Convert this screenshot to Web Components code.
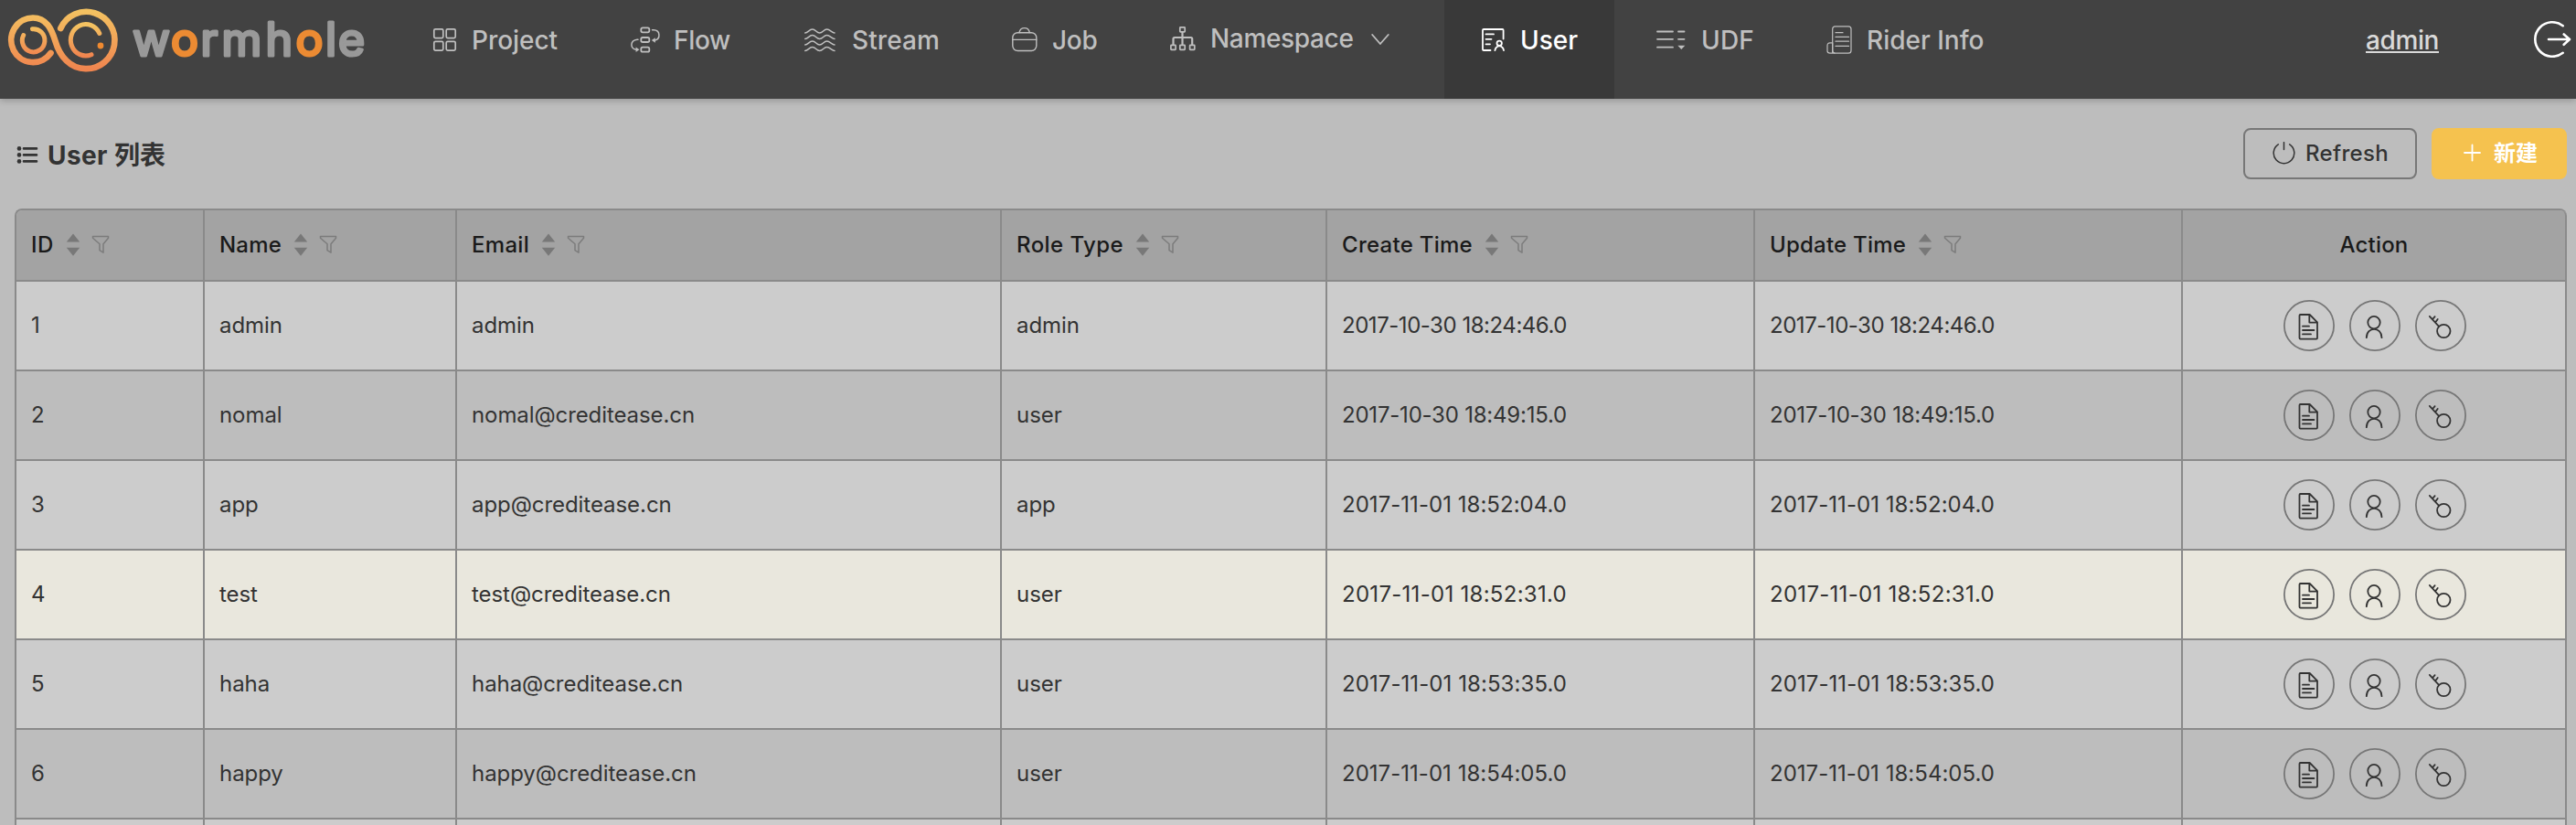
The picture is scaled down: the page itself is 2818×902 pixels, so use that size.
<!DOCTYPE html>
<html lang="zh-CN">
<head>
<meta charset="utf-8">
<title>Wormhole</title>
<style>
html,body{margin:0;height:902px;overflow:hidden;background:#bdbdbd;font-family:Inter,"Noto Sans CJK SC",sans-serif}
</style>
</head>
<body>
<worm-app></worm-app>
<script>
const define=(name,cls)=>customElements.define(name,cls);
const root=(el,html)=>{const t=document.createElement('template');t.innerHTML=html;el.attachShadow({mode:'open'}).append(t.content.cloneNode(true));return el.shadowRoot;};

/* Text whose tracking is adjusted so that its line takes a given width. */
define('track-text',class extends HTMLElement{
  connectedCallback(){
    if(this.shadowRoot)return;
    const s=root(this,`<style>:host{display:inline-block;white-space:pre}span{display:inline-block;text-decoration:inherit}</style><span><slot></slot></span>`);
    const w=+this.getAttribute('w');
    if(w){const e=s.querySelector('span');e.style.letterSpacing='0px';const n=this.textContent.length;
      e.style.letterSpacing=((w-e.getBoundingClientRect().width)/n).toFixed(3)+'px';this.style.width=w+'px';}
  }
});

define('worm-logo',class extends HTMLElement{
  connectedCallback(){root(this,`<style>:host{display:block;width:434px;height:108px}svg{display:block}
  text{font:400 50px Inter,sans-serif;fill:#999;stroke:#999;stroke-width:3.200;stroke-linejoin:round}.o{fill:#ec8b33;stroke:#ec8b33}</style>
  <svg width="434" height="108" fill="none" stroke-linecap="round">
  <defs><linearGradient id="g" gradientUnits="userSpaceOnUse" x1="0" y1="12" x2="0" y2="76"><stop offset="0" stop-color="#f4c261"/><stop offset="1" stop-color="#f0854f"/></linearGradient>
  <linearGradient id="h" gradientUnits="userSpaceOnUse" x1="0" y1="28" x2="0" y2="61"><stop offset="0" stop-color="#f4c261"/><stop offset="1" stop-color="#f0854f"/></linearGradient></defs>
  <path stroke="url(#g)" stroke-width="6.700" d="M55.500 58A23.900 24.300 0 1 1 36 19.500C51 19.500 56.500 32 60.500 45C65.500 62 77 75.200 93.500 75.200A31 31.200 0 1 0 66.300 31"/>
  <g stroke="url(#h)" stroke-width="5"><path d="M35.500 31.700A12.300 12.600 0 1 1 25.700 38.500"/><path d="M108.800 36.500A16.500 17.200 0 1 0 100 59.700"/></g>
  <circle cx="110" cy="50" r="3.400" fill="#ef8a30"/>
  <text y="61" x="145 187 219.500 242.500 290.500 323.500 356 370">w<tspan class="o">o</tspan>rmh<tspan class="o">o</tspan>le</text></svg>`);}
});

const wave=y=>`<path d="M.7 ${y+4}C4 ${y+4} 5 ${y} 8.700 ${y}S13 ${y+4} 16.600 ${y+4}S21 ${y} 24.500 ${y}S30 ${y+4} 33 ${y+4}"/>`;
const navIcons={
 project:`<g stroke-width="1.700"><rect x=".8" y="31.800" width="10" height="9.800" rx="1.500"/><rect x="14.200" y="31.800" width="10" height="9.800" rx="1.500"/><rect x=".8" y="45.300" width="10" height="9.800" rx="1.500"/><rect x="14.200" y="45.300" width="10" height="9.800" rx="1.500"/></g>`,
 flow:`<g stroke-width="1.800"><rect x="11.300" y="30.300" width="9" height="5" rx="1.800"/><rect x="11.300" y="41" width="9" height="5" rx="1.800"/><rect x="11.300" y="51.700" width="9" height="5" rx="1.800"/></g><g stroke-width="1.500"><path d="M23.500 32.800H25C32.500 33 33 42.500 26 44.200M8 43.200H7C-1 44 -1 53.500 6 54.200"/><path fill="currentColor" stroke="none" d="M22.800 44L26.800 41.200V46.800ZM9.400 54.300L5.600 51.600V57Z"/></g>`,
 stream:`<g stroke-width="1.500">${[32,38.5,45,51.5].map(wave).join('')}</g>`,
 job:`<g stroke-width="1.400"><rect x=".8" y="35.700" width="26" height="19.800" rx="5.500"/><path d="M.8 43.400H26.800M8 35.500C9.500 29 18 29 19.300 35.500"/></g>`,
 namespace:`<g stroke-width="1.700"><rect x="10.800" y="29.800" width="5.400" height="5" rx=".6"/><rect x=".9" y="49.300" width="5.200" height="5" rx=".6"/><rect x="10.800" y="49.300" width="5.400" height="5" rx=".6"/><rect x="21.600" y="49.300" width="5.200" height="5" rx=".6"/></g><path stroke-width="2.200" d="M13.500 35V49M3.500 49V42.500Q3.500 41 5 41H22.700Q24.200 41 24.200 42.500V49"/>`,
 user:`<g stroke-width="1.800"><path d="M24.600 42.500V33Q24.600 32 23.600 32H3Q2 32 2 33V54Q2 55 3 55H10.500M5.500 37.400H14M5.500 42.800H11.500M5.500 48.300H10"/><circle cx="20.200" cy="47.300" r="2.700"/><path d="M15.400 55.200Q16 51 20.200 50.200Q24.400 51 25 55.200"/></g>`,
 udf:`<path stroke-width="1.800" d="M7 34.500H24M7 42.800H24M7 51.700H24M30 34.500H36.500M30 42.800H36.500"/><path fill="currentColor" stroke="none" d="M29.300 49.700H37.300L33.300 53.900Z"/>`,
 rider:`<g stroke-width="1.200"><rect x="6.700" y="28.800" width="20.300" height="29.400" rx="3"/><path d="M6.700 58V46.800H4Q1 46.800 1 50V55.500Q1 58.200 4 58.200H9M10 35.700H18M10 40.400H24.500M10 45.200H24.500M10 50.400H24.500"/></g>`
};
define('nav-item',class extends HTMLElement{
  connectedCallback(){const a=n=>this.getAttribute(n);
  root(this,`<style>:host{display:flex;box-sizing:border-box;width:${a('width')}px;height:108px;padding-left:40px;color:#bfbfbf;font-size:28px;font-weight:500}
  :host([active]){background:#393939;color:#fff}.icon{flex:none;display:block;width:${a('gap')}px;height:108px;overflow:visible}.label{line-height:${a('icon')==='namespace'?84:88}px;white-space:nowrap}
  .chev{flex:none;margin-left:19px}</style>
  <svg class="icon" fill="none" stroke="currentColor" stroke-linecap="round" stroke-linejoin="round">${navIcons[a('icon')]}</svg>
  <span class="label"><track-text w="${a('w')}">${a('label')}</track-text></span>
  ${this.hasAttribute('menu')?`<svg class="chev" width="20" height="108" fill="none" stroke="currentColor" stroke-width="1.800" stroke-linecap="round" stroke-linejoin="round"><path d="M1.200 38L9.900 48L18.700 38"/></svg>`:''}`);}
});

define('top-bar',class extends HTMLElement{
  connectedCallback(){root(this,`<style>:host{display:flex;height:108px;background:#424242;box-shadow:0 2px 7px rgba(0,0,0,.22)}
  .me{margin-left:auto;margin-right:104px;line-height:88px;color:#d9d9d9;font-size:28px;font-weight:500}
  .me track-text{text-decoration:underline 2px;text-underline-offset:2px;text-decoration-skip-ink:none}svg{flex:none;display:block}nav{display:flex}</style>
  <worm-logo></worm-logo><nav>
  <nav-item icon="project" label="Project" width="216" gap="42" w="94"></nav-item>
  <nav-item icon="flow" label="Flow" width="190" gap="47" w="62"></nav-item>
  <nav-item icon="stream" label="Stream" width="227" gap="52" w="96"></nav-item>
  <nav-item icon="job" label="Job" width="173" gap="44" w="49.500"></nav-item>
  <nav-item icon="namespace" label="Namespace" width="340" gap="44" w="156.500" menu></nav-item>
  <nav-item icon="user" label="User" width="186" gap="43" w="63" active></nav-item>
  <nav-item icon="udf" label="UDF" width="192" gap="55" w="58"></nav-item>
  <nav-item icon="rider" label="Rider Info" width="252" gap="44" w="128.500"></nav-item></nav>
  <a class="me"><track-text w="80">admin</track-text></a>
  <svg width="46" height="108" fill="none" stroke="#fff" stroke-width="2.600" stroke-linecap="round" stroke-linejoin="round"><path d="M31.700 28.200A18.800 18.800 0 1 0 31.700 57.800M16 43H38.500M32.700 37.500L39 43L32.700 48.800"/></svg>`);}
});

define('tool-button',class extends HTMLElement{
  connectedCallback(){root(this,`<style>:host{display:flex;align-items:center;box-sizing:border-box;width:190px;height:56px;padding-left:30px;border:2px solid #777;border-radius:8px;color:#333;font-size:24px;font-weight:500;line-height:50px}
  :host([primary]){width:148px;border-color:#f5c24f;background:#f5c24f;color:#fff;font-weight:700;padding-left:32px}.t{margin-left:11px;padding-bottom:1px}:host([primary]) .t{margin-left:14px;padding:0}svg{display:block;flex:none}</style>
  ${this.hasAttribute('primary')?`<svg width="20" height="24" stroke="#fff" stroke-width="1.800" stroke-linecap="round"><path d="M2 11H19M10.500 2.500V19.500"/></svg>`
  :`<svg width="25" height="26" fill="none" stroke="#333" stroke-width="1.500" stroke-linecap="round"><path d="M6.300 2.900A11.300 11.300 0 1 0 18.700 2.900M12.500 .7V8.500"/></svg>`}<span class="t"><slot></slot></span>`);}
});

define('page-head',class extends HTMLElement{
  connectedCallback(){root(this,`<style>:host{display:flex;gap:16px;box-sizing:border-box;height:120px;padding:32px 10px 32px 16px}h1{display:flex;margin:0 auto 0 0;font-size:28px;font-weight:700;line-height:61px;color:#333;white-space:pre}h1 svg{flex:none}</style>
  <h1><svg width="36" height="60"><g fill="#333"><circle cx="5" cy="22.400" r="2.300"/><circle cx="5" cy="29.400" r="2.300"/><circle cx="5" cy="36.400" r="2.300"/></g><path stroke="#333" stroke-width="2.600" stroke-linecap="round" d="M10 22.400H24M10 29.400H24M10 36.400H24"/></svg><track-text w="73">User </track-text><span>列表</span></h1>
  <tool-button><track-text w="91">Refresh</track-text></tool-button><tool-button primary>新建</tool-button>`);}
});

define('column-head',class extends HTMLElement{
  connectedCallback(){root(this,`<style>:host{display:flex;align-items:center;height:76px;padding-left:16px;border-right:2px solid #8a8a8a;border-bottom:2px solid #8a8a8a;color:#1a1a1a;font-size:24px;font-weight:500}
  :host([center]){justify-content:center;padding:0}.t{line-height:76px}svg{flex:none;display:block;margin-left:13px}</style>
  <span class="t"><slot></slot></span>${this.hasAttribute('center')?'':`<svg width="50" height="26"><path fill="#787878" d="M.8 9.500L8 .5L15.200 9.500ZM.8 15.700H15.200L8 24.700Z"/><path fill="none" stroke="#7c7c7c" stroke-width="1.500" stroke-linejoin="round" d="M29.500 3.500H46.500V5.200L41 11.700V21.200L37 18.700V11.700L29.500 5.200Z"/></svg>`}`);}
});

const acts=[
 `<path d="M28.700 16H18.500Q17.500 16 17.500 17V41.600Q17.500 42.600 18.500 42.600H36Q37 42.600 37 41.600V24.300ZM28.300 16.500V24.600H36.500M21 28.700H28M21 33H33.400M21 37.400H30"/>`,
 `<circle cx="27" cy="24.600" r="6.700"/><path d="M18.800 41.200C19 28.800 35.300 28.800 35.500 41.200"/>`,
 `<circle cx="31.300" cy="34" r="7.200"/><path d="M26 28.800L15.800 17.900M19.200 21L21.600 18.200M22.500 24L24.700 21"/>`];
define('row-actions',class extends HTMLElement{
  connectedCallback(){root(this,`<style>:host{display:flex;gap:16px}svg{display:block}</style>${acts.map(a=>`<svg width="56" height="56" fill="none" stroke="#333" stroke-width="1.800" stroke-linecap="round" stroke-linejoin="round"><circle cx="28" cy="28" r="27.100" stroke="#777"/>${a}</svg>`).join('')}`);}
});

define('user-row',class extends HTMLElement{
  connectedCallback(){const d=this.getAttribute('data').split('|');
  root(this,`<style>:host{display:grid;grid-template-columns:206px 276px 596px 356px 468px 468px 420px;height:98px;color:#333;font-size:24px;letter-spacing:-.06px}
  div{box-sizing:border-box;height:98px;border-right:2px solid #8a8a8a;border-bottom:2px solid #8a8a8a;padding:0 0 0 16px;line-height:96px;white-space:nowrap}
  .act{display:flex;align-items:center;justify-content:center;padding:0 0 0 2px}</style>${d.map((v,i)=>`<div>${v?`<track-text${i>3?' w="246"':v.includes('nomal@')?' w="244"':''}>${v}</track-text>`:''}</div>`).join('')}<div class="act"><row-actions></row-actions></div>`);}
});

define('user-table',class extends HTMLElement{
  connectedCallback(){
  const heads=[['ID',25],['Name',68],['Email',63],['Role Type',117],['Create Time',143],['Update Time',149]];
  const rows=['1|admin|admin|admin|2017-10-30 18:24:46.0','2|nomal|nomal@creditease.cn|user|2017-10-30 18:49:15.0','3|app|app@creditease.cn|app|2017-11-01 18:52:04.0','4|test|test@creditease.cn|user|2017-11-01 18:52:31.0','5|haha|haha@creditease.cn|user|2017-11-01 18:53:35.0','6|happy|happy@creditease.cn|user|2017-11-01 18:54:05.0','||||'];
  root(this,`<style>:host{display:block;box-sizing:border-box;width:2792px;height:700px;margin-left:16px;border:2px solid #8a8a8a;border-width:2px 0 0 2px;border-radius:8px 8px 0 0;overflow:hidden}
  header{display:grid;grid-template-columns:206px 276px 596px 356px 468px 468px 420px;background:#a3a3a3}column-head:last-child{border-top-right-radius:6px}
  user-row:nth-of-type(odd){background:#ccc}user-row.hover{background:#e9e7dd}</style>
  <header>${heads.map(([t,w])=>`<column-head><track-text w="${w}">${t}</track-text></column-head>`).join('')}<column-head center><track-text w="75">Action</track-text></column-head></header>
  ${rows.map((r,i)=>`<user-row class="${i===3?'hover':''}" data="${r}|${r.split('|')[4]}"></user-row>`).join('')}`);}
});

define('worm-app',class extends HTMLElement{
  connectedCallback(){root(this,`<style>:host{display:flex;flex-direction:column;width:2818px;height:902px;overflow:hidden;background:#bdbdbd}</style><top-bar></top-bar><page-head></page-head><user-table></user-table>`);}
});
</script>
</body>
</html>
